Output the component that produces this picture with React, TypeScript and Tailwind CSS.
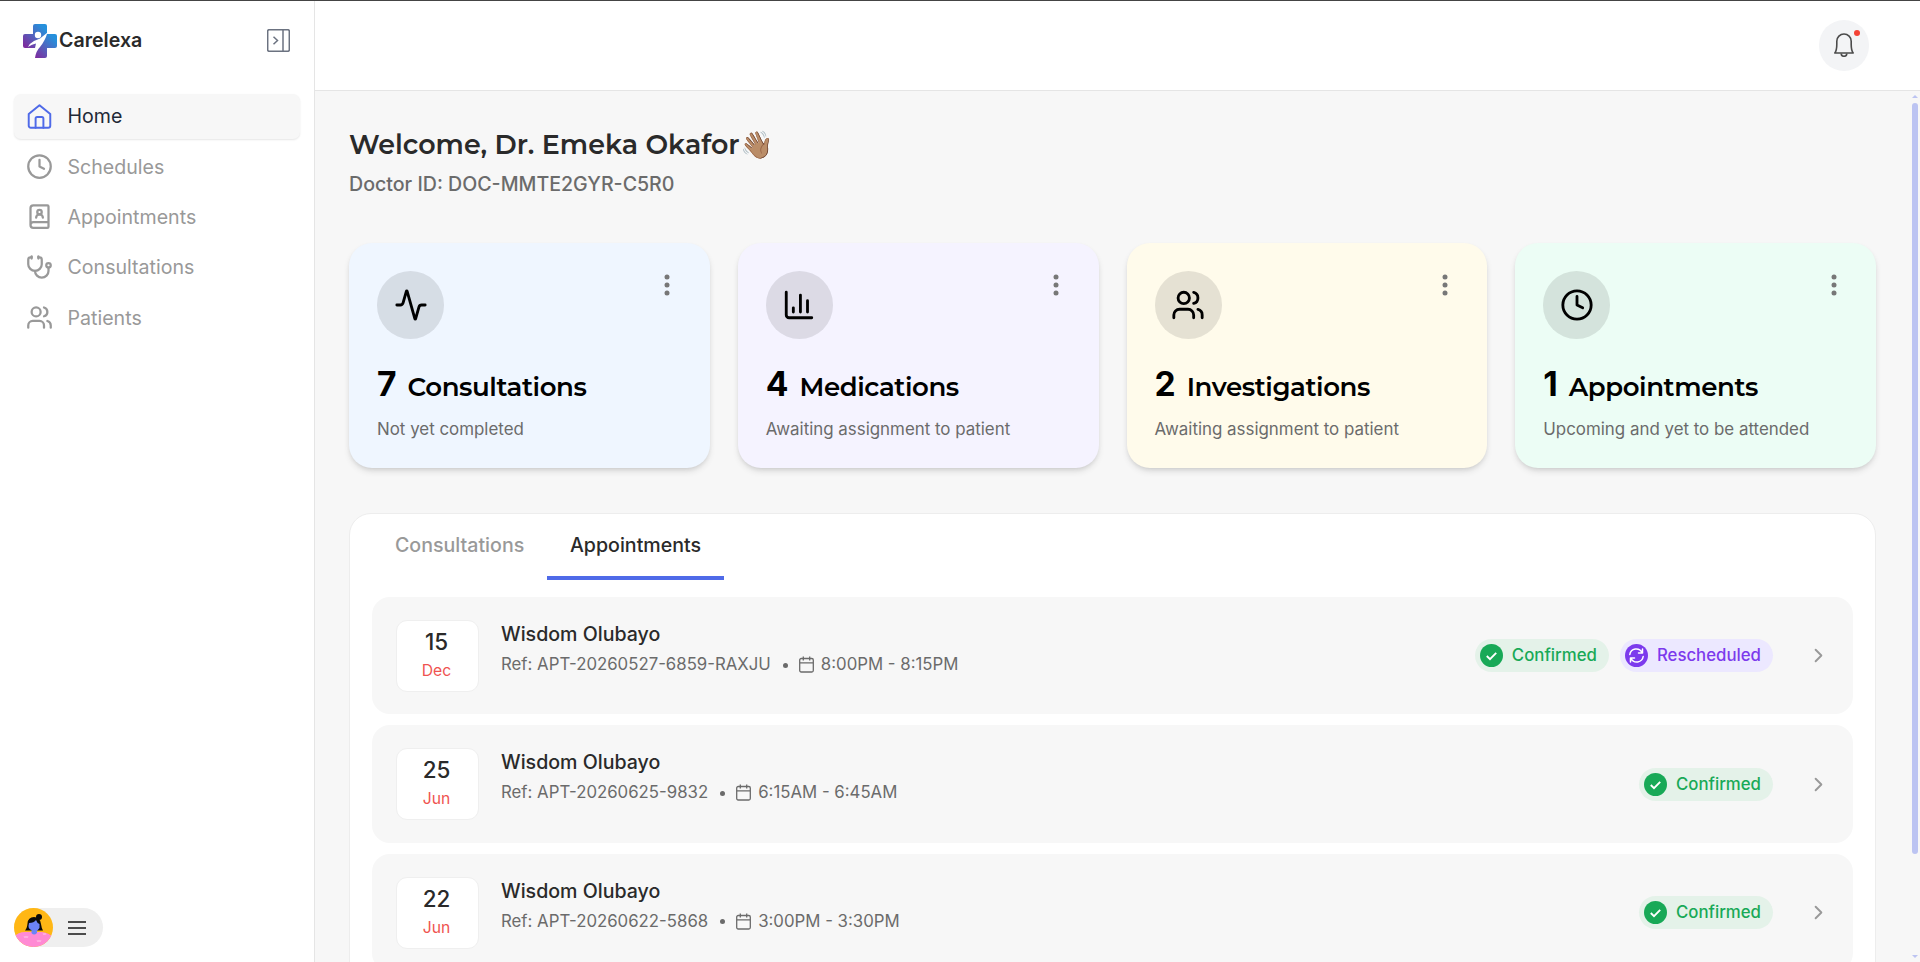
import React from 'react';
import { Activity, ChevronRight, Stethoscope } from 'lucide-react';

const ClockIcon: React.FC<{ className?: string }> = ({ className }) => (
  <svg className={className} viewBox="0 0 24 24" fill="none" stroke="currentColor" strokeWidth="2" strokeLinecap="round" strokeLinejoin="round">
    <circle cx="12" cy="12" r="10" />
    <path d="M12 6v6l4 2" />
  </svg>
);

const UsersIcon: React.FC<{ className?: string }> = ({ className }) => (
  <svg className={className} viewBox="0 0 24 24" fill="none" stroke="currentColor" strokeWidth="2" strokeLinecap="round" strokeLinejoin="round">
    <path d="M16 21v-2a4 4 0 0 0-4-4H6a4 4 0 0 0-4 4v2" />
    <circle cx="9" cy="7" r="4" />
    <path d="M22 21v-2a4 4 0 0 0-3-3.87" />
    <path d="M16 3.13a4 4 0 0 1 0 7.75" />
  </svg>
);

const ChartIcon: React.FC<{ className?: string }> = ({ className }) => (
  <svg className={className} viewBox="0 0 24 24" fill="none" stroke="currentColor" strokeWidth="2" strokeLinecap="round" strokeLinejoin="round">
    <path d="M3 3v16a2 2 0 0 0 2 2h16" />
    <path d="M18 17V9" />
    <path d="M13 17V5" />
    <path d="M8 17v-3" />
  </svg>
);

const HomeIcon: React.FC<{ className?: string }> = ({ className }) => (
  <svg className={className} viewBox="0 0 24 24" fill="none" stroke="currentColor" strokeWidth="1.9" strokeLinecap="round" strokeLinejoin="round">
    <path d="M1.500 9.600 12 1l10.500 8.600v11.400a2 2 0 0 1-2 2h-17a2 2 0 0 1-2-2z" />
    <path d="M8.200 23v-9a1.500 1.500 0 0 1 1.500-1.500h4.600a1.500 1.500 0 0 1 1.500 1.500v9" />
  </svg>
);

const BookUserIcon: React.FC<{ className?: string }> = ({ className }) => (
  <svg className={className} viewBox="0 0 24 24" fill="none" stroke="currentColor" strokeWidth="2" strokeLinecap="round" strokeLinejoin="round">
    <path d="M15 13a3 3 0 1 0-6 0" />
    <path d="M4 19.500v-15A2.500 2.500 0 0 1 6.500 2H19a1 1 0 0 1 1 1v18a1 1 0 0 1-1 1H6.500a1 1 0 0 1 0-5H20" />
    <circle cx="12" cy="8" r="2" />
  </svg>
);

const Logo = () => (
  <svg className="h-[34px] w-[34px]" viewBox="0 0 34 34">
    <defs>
      <linearGradient id="logo" x1="0" y1="1" x2="1" y2="0">
        <stop offset="0.2" stopColor="#7d2d9f" />
        <stop offset="0.5" stopColor="#4f67c0" />
        <stop offset="0.75" stopColor="#2590dc" />
      </linearGradient>
    </defs>
    <path
      fill="url(#logo)"
      d="M12 0h10q2 0 2 2v8h8q2 0 2 2v10q0 2-2 2h-8v8q0 2-2 2H12V24H2q-2 0-2-2V12q0-2 2-2h8V2q0-2 2-2z"
    />
    <circle cx="15" cy="11" r="3.200" fill="#fff" />
    <path fill="#fff" d="M24.500 8.500 17 14.500q-3 1-6 2.500-4 2-6 6 4-3 8-3.500l-1 4.500-1 3.500 1 .5v6q1-7 5-11 5-6 7.500-14.500z" />
  </svg>
);

const Avatar = () => (
  <svg className="h-[39px] w-[39px] rounded-full" viewBox="0 0 39 39">
    <rect width="39" height="39" fill="#ffb715" />
    <path d="M0 39V29q4-5 11-5h17q8 1 11 6v9z" fill="#ff8ad4" />
    <circle cx="25" cy="9" r="3" fill="#0a0a0a" />
    <path d="M11 22.500q2-2 2.500-7Q14 9 20 9q6 0 7 7 .5 4 2 6.500z" fill="#0a0a0a" />
    <path d="M15 15q5 0 7-3 1 3 3.500 4v4l-2.500 3v2q-3 3-5.500 0v-3q-3-1-3-4z" fill="#6c83f7" />
    <path d="M10 28l1 2 1-2 1 2 1-2M23 32l1 2 1-2 1 2 1-2M29 25l1 2 1-2 1 2" stroke="#ffc4ea" strokeWidth="0.7" fill="none" />
  </svg>
);

const navItems = [
  { label: 'Home', icon: HomeIcon, active: true },
  { label: 'Schedules', icon: ClockIcon },
  { label: 'Appointments', icon: BookUserIcon },
  { label: 'Consultations', icon: Stethoscope },
  { label: 'Patients', icon: UsersIcon },
];

const stats = [
  { count: 7, title: 'Consultations', note: 'Not yet completed', icon: Activity, bg: 'bg-[#eff6ff]' },
  { count: 4, title: 'Medications', note: 'Awaiting assignment to patient', icon: ChartIcon, bg: 'bg-[#f5f3ff]' },
  { count: 2, title: 'Investigations', note: 'Awaiting assignment to patient', icon: UsersIcon, bg: 'bg-[#fffbeb]' },
  { count: 1, title: 'Appointments', note: 'Upcoming and yet to be attended', icon: ClockIcon, bg: 'bg-[#ecfdf5]' },
];

const appointments = [
  { day: '15', month: 'Dec', name: 'Wisdom Olubayo', reference: 'APT-20260527-6859-RAXJU', time: '8:00PM - 8:15PM', rescheduled: true },
  { day: '25', month: 'Jun', name: 'Wisdom Olubayo', reference: 'APT-20260625-9832', time: '6:15AM - 6:45AM' },
  { day: '22', month: 'Jun', name: 'Wisdom Olubayo', reference: 'APT-20260622-5868', time: '3:00PM - 3:30PM' },
];

const Sidebar = () => (
  <aside className="flex w-[315px] shrink-0 flex-col border-r border-[#e5e5e5] bg-white">
    <div className="flex h-[79px] items-center justify-between pr-[24px] pl-[23px]">
      <div className="flex items-center gap-[2px]">
        <Logo />
        <span className="text-[19.600px] font-semibold text-[#2a2a2a]">Carelexa</span>
      </div>
      <svg className="h-[23px] w-[23px] text-[#6b7280]" viewBox="0 0 23 23" fill="none" stroke="currentColor" strokeWidth="1.500">
        <rect x="0.700" y="0.700" width="21.600" height="21.600" rx="1.500" />
        <path d="M16 1v21" />
        <path d="m6.500 7.800 4 3.700-4 3.700" />
      </svg>
    </div>
    <nav className="mt-[14px] flex flex-col gap-[5.500px] px-[14px]">
      {navItems.map((item) => (
        <div
          key={item.label}
          className={
            item.active
              ? 'flex h-[44.800px] items-center gap-[14.500px] rounded-[7px] bg-[#f7f7f7] pl-3 text-[#1f2937] shadow-[0_1px_2px_rgba(0,0,0,0.1)]'
              : 'flex h-[44.800px] items-center gap-[14.500px] rounded-[7px] pl-3 text-[#999]'
          }
        >
          <item.icon className={item.active ? 'h-[27px] w-[27px] p-[1.200px] text-[#4f6ae8]' : 'h-[27px] w-[27px]'} />
          <span className="text-[19.600px] leading-7">{item.label}</span>
        </div>
      ))}
    </nav>
    <div className="mt-auto mb-[15px] ml-[14px] flex h-[39px] w-[89px] items-center rounded-full bg-[#efefef]">
      <Avatar />
      <svg className="ml-[15px] h-[14px] w-[18px]" viewBox="0 0 18 14" stroke="#4b4b4b" strokeWidth="1.800">
        <path d="M0 1h18M0 7h18M0 13h18" />
      </svg>
    </div>
  </aside>
);

const StatCard: React.FC<{ stat: (typeof stats)[number] }> = ({ stat }) => (
  <div className={`h-[225px] rounded-[23px] pt-7 pl-7 shadow-[0_4px_7px_-1px_rgba(0,0,0,0.12),0_2px_5px_-2px_rgba(0,0,0,0.12)] ${stat.bg}`}>
    <div className="flex items-start justify-between pr-[39.500px]">
      <div className="flex h-[68px] w-[67px] items-center justify-center rounded-full bg-black/10">
        <stat.icon className="h-[34px] w-[34px] text-black" />
      </div>
      <svg className="mt-[3px] h-[22px] w-[6px]" viewBox="0 0 6 22" fill="#777">
        <circle cx="3" cy="3" r="2.500" />
        <circle cx="3" cy="11" r="2.500" />
        <circle cx="3" cy="19" r="2.500" />
      </svg>
    </div>
    <div className="mt-[25px] flex items-baseline gap-[11px] text-black">
      <span className="text-[33.600px] leading-[40px] font-bold">{stat.count}</span>
      <span className="font-[Montserrat,Inter,sans-serif] text-[26px] leading-[40px] font-semibold tracking-[-0.400px]">{stat.title}</span>
    </div>
    <p className="mt-[10px] text-[16.900px] leading-6 text-[#6b6b6b]">{stat.note}</p>
  </div>
);

const Confirmed = () => (
  <div className="flex h-[33px] items-center gap-[9px] rounded-full bg-[#e4f2e9] pr-[12px] pl-[5px]">
    <svg className="h-[23px] w-[23px]" viewBox="0 0 23 23" fill="none">
      <circle cx="11.500" cy="11.500" r="11.500" fill="#18a957" />
      <path d="m6.800 12 3.200 3.100 6.200-6.200" stroke="#fff" strokeWidth="1.900" />
    </svg>
    <span className="text-[16.800px] font-medium text-[#18a957]">Confirmed</span>
  </div>
);

const Rescheduled = () => (
  <div className="flex h-[33px] items-center gap-[9px] rounded-full bg-[#ece8ff] pr-[12px] pl-[5px]">
    <svg className="h-[23px] w-[23px]" viewBox="0 0 23 23" fill="none" stroke="#fff" strokeWidth="1.500" strokeLinecap="round" strokeLinejoin="round">
      <circle cx="11.500" cy="11.500" r="11.500" fill="#7c3aed" stroke="none" />
      <path d="M4.800 10.500A6.500 6.500 0 0 1 17 8.500M17.500 5v4h-4M18.200 12.500A6.500 6.500 0 0 1 6 14.500M5.500 18v-4h4" />
    </svg>
    <span className="text-[16.800px] font-medium text-[#7c3aed]">Rescheduled</span>
  </div>
);

const AppointmentRow: React.FC<{ item: (typeof appointments)[number] }> = ({ item }) => (
  <div className="flex h-[117.300px] shrink-0 items-center rounded-[18px] bg-[#f7f7f7] pr-[23.500px] pl-[23.500px]">
    <div className="flex h-[72px] w-[83px] flex-col items-center rounded-[11px] border border-[#efefef] bg-white pt-[7px] pr-px">
      <span className="text-[22.400px] leading-7 font-medium text-[#2a2a2a]">{item.day}</span>
      <span className="mt-[3px] text-[15.700px] leading-6 text-[#ef5350]">{item.month}</span>
    </div>
    <div className="ml-[22.500px] self-start pt-[23px]">
      <p className="text-[19.600px] leading-7 font-medium text-[#2a2a2a]">{item.name}</p>
      <div className="mt-1 flex items-center text-[16.800px] leading-6 text-[#6b6b6b]">
        <span>Ref: {item.reference}</span>
        <span className="mr-[11px] ml-[12px] mt-[2px] h-[5px] w-[5px] rounded-full bg-[#6b6b6b]" />
        <svg className="mt-[1px] mr-[7px] h-[17px] w-[15px]" viewBox="0 0 15 17" fill="none" stroke="currentColor" strokeWidth="1.300">
          <rect x="0.700" y="2.500" width="13.600" height="13.500" rx="1.500" />
          <path d="M1 6.800h13M4.300 0.500v4M10.700 0.500v4" />
        </svg>
        <span>{item.time}</span>
      </div>
    </div>
    <div className="ml-auto flex items-center gap-[11px]">
      <Confirmed />
      {item.rescheduled && <Rescheduled />}
    </div>
    <ChevronRight className="ml-[33.500px] h-[23px] w-[23px] text-[#999]" strokeWidth={2} />
  </div>
);

const App: React.FC = () => {
  return (
    <div className="flex h-screen overflow-hidden border-t border-[#444] bg-[#f7f7f7] font-[Inter,sans-serif]">
      <Sidebar />
      <div className="flex min-w-0 flex-1 flex-col">
        <header className="flex h-[90px] shrink-0 items-start justify-end border-b border-[#e5e5e5] bg-white pt-[19px] pr-[51px]">
          <div className="relative flex h-[51px] w-[50px] items-center justify-center rounded-full bg-[#f3f4f6]">
            <svg className="mb-px h-[24px] w-[20px] text-[#4b4b4b]" viewBox="0 0 20 24" fill="none" stroke="currentColor" strokeWidth="1.600" strokeLinejoin="round">
              <path d="M.8 20h18.400q-2-2.500-2-8.500V8.200A7.200 7.200 0 0 0 2.800 8.200v3.300q0 6-2 8.500z" />
              <path d="M7.200 20.500a2.800 2.800 0 0 0 5.600 0" />
            </svg>
            <span className="absolute top-[10px] right-[9px] h-[6px] w-[6px] rounded-full bg-[#f44336]" />
          </div>
        </header>
        <div className="flex min-h-0 flex-1">
          <main className="flex min-w-0 flex-1 flex-col overflow-hidden pr-[36px] pl-[34px]">
            <h1 className="mt-[36px] flex items-center font-[Montserrat,Inter,sans-serif] text-[26.900px] leading-9 font-semibold text-[#2a2a2a]">
              <span>Welcome, Dr. Emeka Okafor</span>
              <span>👋🏽</span>
            </h1>
            <p className="mt-[7px] text-[19.600px] leading-7 font-medium text-[#6b6b6b]">Doctor ID: DOC-MMTE2GYR-C5R0</p>
            <section className="mt-[45px] grid grid-cols-4 gap-7">
              {stats.map((stat) => (
                <StatCard key={stat.title} stat={stat} />
              ))}
            </section>
            <section className="mt-[45px] flex shrink-0 flex-col rounded-[22px] border border-[#ededed] bg-white px-[22px] pb-6">
              <div className="flex h-[66px] text-[19.600px] leading-7 font-medium">
                <div className="w-[175px] pt-[17px] pl-[23px] text-[#999]">Consultations</div>
                <div className="w-[177px] border-b-4 border-[#4f6ae8] pt-[17px] text-center text-[#2a2a2a]">Appointments</div>
              </div>
              <div className="mt-[17px] flex flex-col gap-[11.200px]">
                {appointments.map((item) => (
                  <AppointmentRow key={item.reference} item={item} />
                ))}
              </div>
            </section>
          </main>
          <div className="flex w-[8px] shrink-0 flex-col items-start">
            <div className="mt-[4px] h-[3px] w-[6px] bg-[#bcc4f2] [clip-path:polygon(50%_0,100%_100%,0_100%)]" />
            <div className="mt-[5px] h-[751px] w-[6px] rounded-full bg-[#bcc4f2]" />
            <div className="mt-auto mb-[4px] h-[3px] w-[6px] bg-[#bcc4f2] [clip-path:polygon(0_0,100%_0,50%_100%)]" />
          </div>
        </div>
      </div>
    </div>
  );
};

export default App;
